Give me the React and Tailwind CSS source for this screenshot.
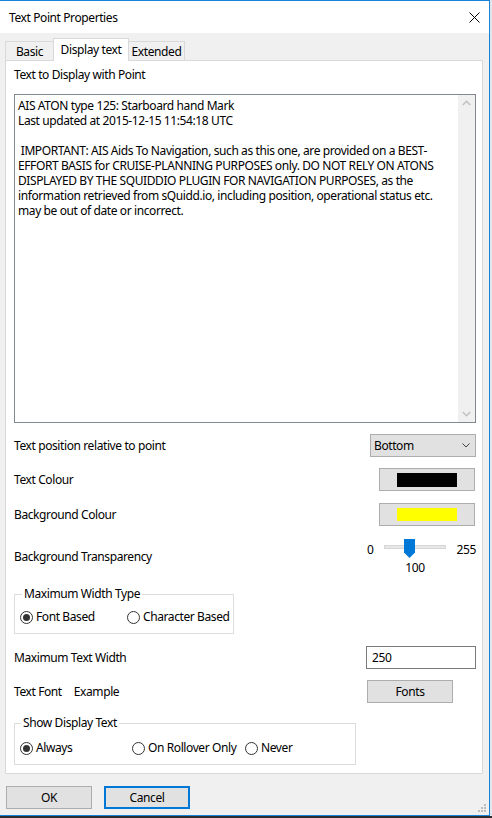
import React from "react";

function Radio({ checked, label }) {
  return (
    <div className="flex items-center h-[16px]">
      <span className="w-[13px] h-[13px] rounded-full border border-[#333333] bg-white flex items-center justify-center shrink-0">
        {checked && <span className="w-[7px] h-[7px] rounded-full bg-[#333333]" />}
      </span>
      <span className="ml-[3px] leading-[16px] whitespace-nowrap">{label}</span>
    </div>
  );
}

function Btn({ className = "", children }) {
  return (
    <div
      className={
        "h-[23px] bg-[#e1e1e1] border border-[#adadad] flex items-center justify-center " +
        className
      }
    >
      {children}
    </div>
  );
}

const lines = [
  "AIS ATON type 125: Starboard hand Mark",
  "Last updated at 2015-12-15 11:54:18 UTC",
  " ",
  " IMPORTANT: AIS Aids To Navigation, such as this one, are provided on a BEST-",
  "EFFORT BASIS for CRUISE-PLANNING PURPOSES only. DO NOT RELY ON ATONS",
  "DISPLAYED BY THE SQUIDDIO PLUGIN FOR NAVIGATION PURPOSES, as the",
  "information retrieved from sQuidd.io, including position, operational status etc.",
  "may be out of date or incorrect.",
];

export default function App() {
  return (
    <div className="w-[492px] h-[818px] flex flex-col bg-[#e8eef4] text-[12px] tracking-[-0.4px] text-black font-['Noto_Sans',sans-serif] overflow-hidden">
      <div className="flex flex-1">
        <div className="w-[490px] h-[816px] flex flex-col border-t border-r border-b border-[#1883d7] bg-[#f0f0f0]">
          {/* Title bar */}
          <div className="h-[32px] bg-white flex items-center justify-between pl-[9px] pr-[9px] shrink-0">
            <span className="leading-[16px] mt-[1px]">Text Point Properties</span>
            <svg width="11" height="11" viewBox="0 0 11 11" className="mt-[1px]">
              <path d="M0.5 0.5 L10.5 10.5 M10.5 0.5 L0.5 10.5" stroke="#000" strokeWidth="1" />
            </svg>
          </div>

          {/* Tabs */}
          <div className="pt-[5px] pl-[5px] flex items-end h-[27px] shrink-0">
            <div className="w-[49px] h-[19px] border border-b-0 border-[#d9d9d9] bg-[#f0f0f0] flex items-center justify-center leading-[16px] pt-[1px]">
              Basic
            </div>
            <div className="-ml-px w-[76px] h-[23px] -mb-px relative z-10 border border-b-0 border-[#d9d9d9] bg-white flex items-start justify-center leading-[16px] pt-[3px]">
              Display text
            </div>
            <div className="-ml-px w-[57px] h-[19px] border border-b-0 border-[#d9d9d9] bg-[#f0f0f0] flex items-center justify-center leading-[16px] pt-[1px]">
              Extended
            </div>
          </div>

          {/* Panel */}
          <div className="ml-[5px] w-[478px] bg-white border border-[#d9d9d9] pl-[8px] pr-[6px] pb-[8px] flex flex-col">
            <div className="pt-[6px] leading-[16px] mb-[11px]">Text to Display with Point</div>

            <div className="h-[329px] border border-[#828790] flex">
              <div className="flex-1 pl-[3px] pt-[3px] leading-[15px] whitespace-pre overflow-hidden">
                {lines.map((l, i) => (
                  <div key={i}>{l}</div>
                ))}
              </div>
              <div className="w-[17px] bg-[#f0f0f0] flex flex-col justify-between items-center py-[5px]">
                <svg width="9" height="6" viewBox="0 0 9 6">
                  <path d="M0.8 5 L4.5 1.3 L8.2 5" stroke="#c2c2c2" strokeWidth="1.6" fill="none" />
                </svg>
                <svg width="9" height="6" viewBox="0 0 9 6">
                  <path d="M0.8 1 L4.5 4.7 L8.2 1" stroke="#c2c2c2" strokeWidth="1.6" fill="none" />
                </svg>
              </div>
            </div>

            <div className="mt-[11px] h-[23px] flex items-center justify-between">
              <span className="leading-[16px]">Text position relative to point</span>
              <div className="w-[106px] h-[23px] bg-[#e1e1e1] border border-[#adadad] flex items-center justify-between pl-[3px] pr-[5px]">
                <span className="leading-[16px]">Bottom</span>
                <svg width="8" height="5" viewBox="0 0 8 5">
                  <path d="M0.5 0.5 L4 4 L7.5 0.5" stroke="#444" strokeWidth="1" fill="none" />
                </svg>
              </div>
            </div>

            <div className="mt-[11px] h-[23px] flex items-center justify-between">
              <span className="leading-[16px]">Text Colour</span>
              <Btn className="w-[96px] mr-[1px]">
                <div className="w-[60px] h-[14px] bg-black" />
              </Btn>
            </div>

            <div className="mt-[12px] h-[23px] flex items-center justify-between">
              <span className="leading-[16px]">Background Colour</span>
              <Btn className="w-[96px] mr-[1px]">
                <div className="w-[60px] h-[13px] bg-[#ffff00]" />
              </Btn>
            </div>

            <div className="mt-[10px] h-[41px] flex justify-between">
              <span className="leading-[16px] mt-[13px]">Background Transparency</span>
              <div className="relative w-[110px] h-[41px]">
                <span className="absolute left-[1px] top-[6px] leading-[16px]">0</span>
                <div className="absolute left-[18px] top-[9px] w-[62px] h-[4px] bg-[#e7e7e7] border border-[#d6d6d6]" />
                <svg className="absolute left-[38px] top-[3px]" width="11" height="19" viewBox="0 0 11 19">
                  <path d="M0 0 H11 V13.5 L5.5 19 L0 13.5 Z" fill="#0078d7" />
                </svg>
                <span className="absolute right-0 top-[6px] leading-[16px]">255</span>
                <span className="absolute left-[34px] w-[30px] top-[24px] leading-[16px] text-center">100</span>
              </div>
            </div>

            <fieldset className="mt-[9px] w-[220px] border border-[#dcdcdc] px-0 pb-[8px] m-0">
              <legend className="ml-[7px] px-[2px] leading-[16px]">Maximum Width Type</legend>
              <div className="mt-[7px] pl-[5px] flex items-center">
                <div className="w-[107px]">
                  <Radio checked label="Font Based" />
                </div>
                <Radio label="Character Based" />
              </div>
            </fieldset>

            <div className="mt-[12px] h-[23px] flex items-center justify-between">
              <span className="leading-[16px]">Maximum Text Width</span>
              <div className="w-[110px] h-[23px] border border-[#7a7a7a] bg-white flex items-center pl-[5px]">
                <span className="leading-[16px]">250</span>
              </div>
            </div>

            <div className="mt-[11px] h-[23px] flex items-center justify-between">
              <span className="leading-[16px] flex">
                <span>Text Font</span>
                <span className="ml-[12px]">Example</span>
              </span>
              <div className="w-[110px] pl-[1px]">
                <Btn className="w-[86px]">
                  <span className="leading-[16px]">Fonts</span>
                </Btn>
              </div>
            </div>

            <fieldset className="mt-[12px] w-[342px] border border-[#dcdcdc] px-0 pb-[8px] m-0">
              <legend className="ml-[6px] px-[2px] leading-[16px]">Show Display Text</legend>
              <div className="mt-[9px] pl-[5px] flex items-center">
                <div className="w-[112px]">
                  <Radio checked label="Always" />
                </div>
                <div className="w-[113px]">
                  <Radio label="On Rollover Only" />
                </div>
                <Radio label="Never" />
              </div>
            </fieldset>
          </div>

          {/* Bottom buttons */}
          <div className="mt-[12px] pl-[6px] flex items-start relative flex-1">
            <Btn className="w-[86px]">
              <span className="leading-[16px]">OK</span>
            </Btn>
            <div className="ml-[12px] w-[86px] h-[23px] bg-[#e1e1e1] border-2 border-[#0078d7] flex items-center justify-center">
              <span className="leading-[16px]">Cancel</span>
            </div>
            <svg className="absolute right-[2px] bottom-[2px]" width="10" height="10" viewBox="0 0 10 10">
              <rect x="7" y="1" width="2" height="2" fill="#bcbcbc" />
              <rect x="4" y="4" width="2" height="2" fill="#bcbcbc" />
              <rect x="7" y="4" width="2" height="2" fill="#bcbcbc" />
              <rect x="1" y="7" width="2" height="2" fill="#bcbcbc" />
              <rect x="4" y="7" width="2" height="2" fill="#bcbcbc" />
              <rect x="7" y="7" width="2" height="2" fill="#bcbcbc" />
            </svg>
          </div>
        </div>
        <div className="flex-1 bg-[#dfe6ee]" />
      </div>
      <div className="h-[2px] bg-[#2d2d30]" />
    </div>
  );
}
